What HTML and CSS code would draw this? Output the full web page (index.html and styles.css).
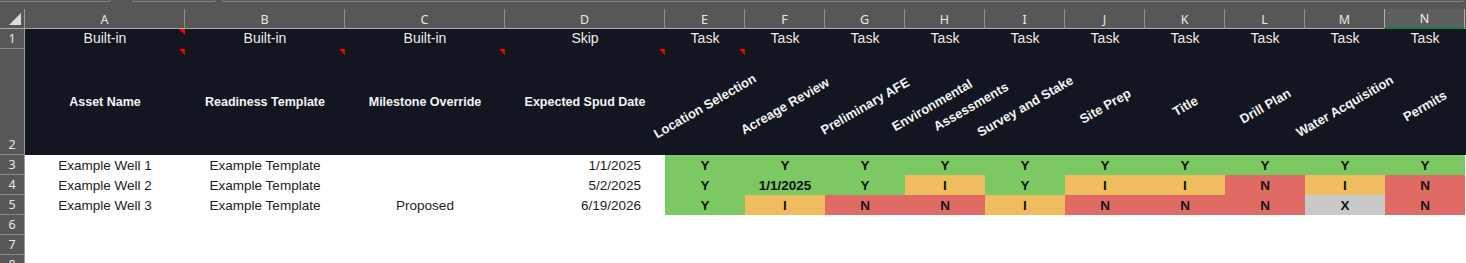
FILE: index.html
```html
<!DOCTYPE html>
<html>
<head>
<meta charset="utf-8">
<link rel="stylesheet" href="styles.css">
</head>
<body>
<div class="sheet">
  <div class="tabs">
    <div class="tab tab1"></div>
    <div class="tab tab2"></div>
    <div class="tab tab3"></div>
  </div>

  <!-- column headers -->
  <div class="ch corner"><span class="corner-tri"></span></div>
  <div class="ch">A</div>
  <div class="ch">B</div>
  <div class="ch">C</div>
  <div class="ch">D</div>
  <div class="ch">E</div>
  <div class="ch">F</div>
  <div class="ch">G</div>
  <div class="ch">H</div>
  <div class="ch">I</div>
  <div class="ch">J</div>
  <div class="ch">K</div>
  <div class="ch">L</div>
  <div class="ch">M</div>
  <div class="ch sel">N</div>
  <div class="ch fill"></div>

  <!-- row 1 -->
  <div class="rh">1</div>
  <div class="d1 note">Built-in</div>
  <div class="d1">Built-in</div>
  <div class="d1">Built-in</div>
  <div class="d1">Skip</div>
  <div class="d1">Task</div>
  <div class="d1">Task</div>
  <div class="d1">Task</div>
  <div class="d1">Task</div>
  <div class="d1">Task</div>
  <div class="d1">Task</div>
  <div class="d1">Task</div>
  <div class="d1">Task</div>
  <div class="d1">Task</div>
  <div class="d1">Task</div>
  <div class="d1"></div>

  <!-- row 2 -->
  <div class="rh">2</div>
  <div class="d2 note">Asset Name</div>
  <div class="d2 note">Readiness Template</div>
  <div class="d2 note">Milestone Override</div>
  <div class="d2 note">Expected Spud Date</div>
  <div class="d2 rot note"><span class="rt">Location Selection</span></div>
  <div class="d2 rot"><span class="rt">Acreage Review</span></div>
  <div class="d2 rot"><span class="rt">Preliminary AFE</span></div>
  <div class="d2 rot"><span class="rt env1">Environmental</span><span class="rt env2">Assessments</span></div>
  <div class="d2 rot"><span class="rt">Survey and Stake</span></div>
  <div class="d2 rot"><span class="rt">Site Prep</span></div>
  <div class="d2 rot"><span class="rt">Title</span></div>
  <div class="d2 rot"><span class="rt">Drill Plan</span></div>
  <div class="d2 rot"><span class="rt">Water Acquisition</span></div>
  <div class="d2 rot"><span class="rt">Permits</span></div>
  <div class="d2"></div>

  <!-- row 3 -->
  <div class="rh">3</div>
  <div class="c">Example Well 1</div>
  <div class="c">Example Template</div>
  <div class="c"></div>
  <div class="c date">1/1/2025</div>
  <div class="s y">Y</div>
  <div class="s y">Y</div>
  <div class="s y">Y</div>
  <div class="s y">Y</div>
  <div class="s y">Y</div>
  <div class="s y">Y</div>
  <div class="s y">Y</div>
  <div class="s y">Y</div>
  <div class="s y">Y</div>
  <div class="s y">Y</div>
  <div class="c"></div>

  <!-- row 4 -->
  <div class="rh">4</div>
  <div class="c">Example Well 2</div>
  <div class="c">Example Template</div>
  <div class="c"></div>
  <div class="c date">5/2/2025</div>
  <div class="s y">Y</div>
  <div class="s y">1/1/2025</div>
  <div class="s y">Y</div>
  <div class="s i">I</div>
  <div class="s y">Y</div>
  <div class="s i">I</div>
  <div class="s i">I</div>
  <div class="s n">N</div>
  <div class="s i">I</div>
  <div class="s n">N</div>
  <div class="c"></div>

  <!-- row 5 -->
  <div class="rh">5</div>
  <div class="c">Example Well 3</div>
  <div class="c">Example Template</div>
  <div class="c">Proposed</div>
  <div class="c date">6/19/2026</div>
  <div class="s y">Y</div>
  <div class="s i">I</div>
  <div class="s n">N</div>
  <div class="s n">N</div>
  <div class="s i">I</div>
  <div class="s n">N</div>
  <div class="s n">N</div>
  <div class="s n">N</div>
  <div class="s x">X</div>
  <div class="s n">N</div>
  <div class="c"></div>

  <div class="rh">6</div><div class="empty"></div>
  <div class="rh">7</div><div class="empty"></div>
  <div class="rh">8</div><div class="empty"></div>
</div>
</body>
</html>
```

FILE: styles.css
```css
html, body {
  margin: 0;
  padding: 0;
  background: #ffffff;
  overflow: hidden;
}

.sheet {
  width: 1466px;
  height: 263px;
  overflow: hidden;
  display: grid;
  grid-template-columns: 25px repeat(4, 160px) repeat(10, 80px) 1fr;
  grid-template-rows: 9px 20px 20px 106px repeat(6, 20px);
  font-family: "Liberation Sans", Arial, sans-serif;
}

/* top strip with tab outlines */
.tabs {
  grid-column: 1 / -1;
  background: #575757;
  display: flex;
  align-items: flex-start;
}
.tab {
  height: 1px;
  border: 1px solid #858585;
  border-top: none;
  border-radius: 0 0 5px 5px;
}
.tab1 { width: 120px; margin-left: -12px; }
.tab2 { width: 82px; margin-left: 22px; }
.tab3 { flex: 1; margin-left: 6px; margin-right: 2px; }

/* column headers */
.ch {
  background: #575757;
  color: #e8e8e8;
  font-family: "Noto Sans", "Open Sans", sans-serif;
  font-size: 12.5px;
  display: flex;
  align-items: center;
  justify-content: center;
  padding-top: 1px;
  box-sizing: border-box;
  border-right: 1px solid #8e8e8e;
  border-bottom: 1px solid #a8a8a8;
}
.ch.corner {
  border-right: 1px solid #9c9c9c;
  position: relative;
}
.corner-tri {
  position: absolute;
  right: 3px;
  bottom: 3px;
  width: 0;
  height: 0;
  border-bottom: 12px solid #dcdcdc;
  border-left: 12px solid transparent;
}
.ch.sel {
  background: #5e5e5e;
  border-left: 1px solid #b0b0b0;
  border-right: 1px solid #b0b0b0;
  border-bottom: 2px solid #1f7a45;
  margin-left: -1px;
  color: #f2f2f2;
}
.ch.fill {
  border-right: none;
}

/* row headers */
.rh {
  grid-column: 1;
  background: #575757;
  color: #e8e8e8;
  font-family: "Noto Sans", "Open Sans", sans-serif;
  font-size: 12.5px;
  display: flex;
  align-items: flex-end;
  justify-content: center;
  padding-bottom: 2px;
  box-sizing: border-box;
  border-right: 1px solid #9c9c9c;
  border-bottom: 1px solid #8a8a8a;
  line-height: 15px;
}

/* dark header rows */
.d1, .d2 {
  background: #111620;
  color: #f1ece6;
  display: flex;
  align-items: center;
  justify-content: center;
  position: relative;
  white-space: nowrap;
}
.d1 {
  font-size: 14px;
  padding-bottom: 2px;
  box-sizing: border-box;
}
.d2 {
  color: #f4f4f4;
  font-weight: bold;
  font-size: 12.5px;
}
.note::after {
  content: "";
  position: absolute;
  top: 0;
  right: 0;
  width: 0;
  height: 0;
  border-top: 6px solid #ff0000;
  border-left: 6px solid transparent;
}
.rot {
  display: grid;
  place-items: center;
  overflow: visible;
  min-width: 0;
}
.rt {
  grid-area: 1 / 1;
  position: relative;
  z-index: 3;
  font-size: 13px;
  white-space: nowrap;
  transform: translateY(3.5px) rotate(-30deg);
}
.rt.env1 {
  transform: translate(-13px, 2.5px) rotate(-30deg);
}
.rt.env2 {
  transform: translate(26px, 4px) rotate(-30deg);
}

/* data cells */
.c, .s {
  display: flex;
  align-items: center;
  justify-content: center;
  padding-top: 1px;
  box-sizing: border-box;
  font-size: 13.5px;
  color: #1c1c1c;
  white-space: nowrap;
  background: #ffffff;
}
.c.date {
  justify-content: flex-end;
  padding-right: 24px;
}
.s {
  font-weight: bold;
  color: #121212;
}
.s.y { background: #7cc862; }
.s.i { background: #efbd60; }
.s.n { background: #e06a64; }
.s.x { background: #c9c9c9; }

.empty {
  grid-column: 2 / -1;
  background: #ffffff;
}
```
